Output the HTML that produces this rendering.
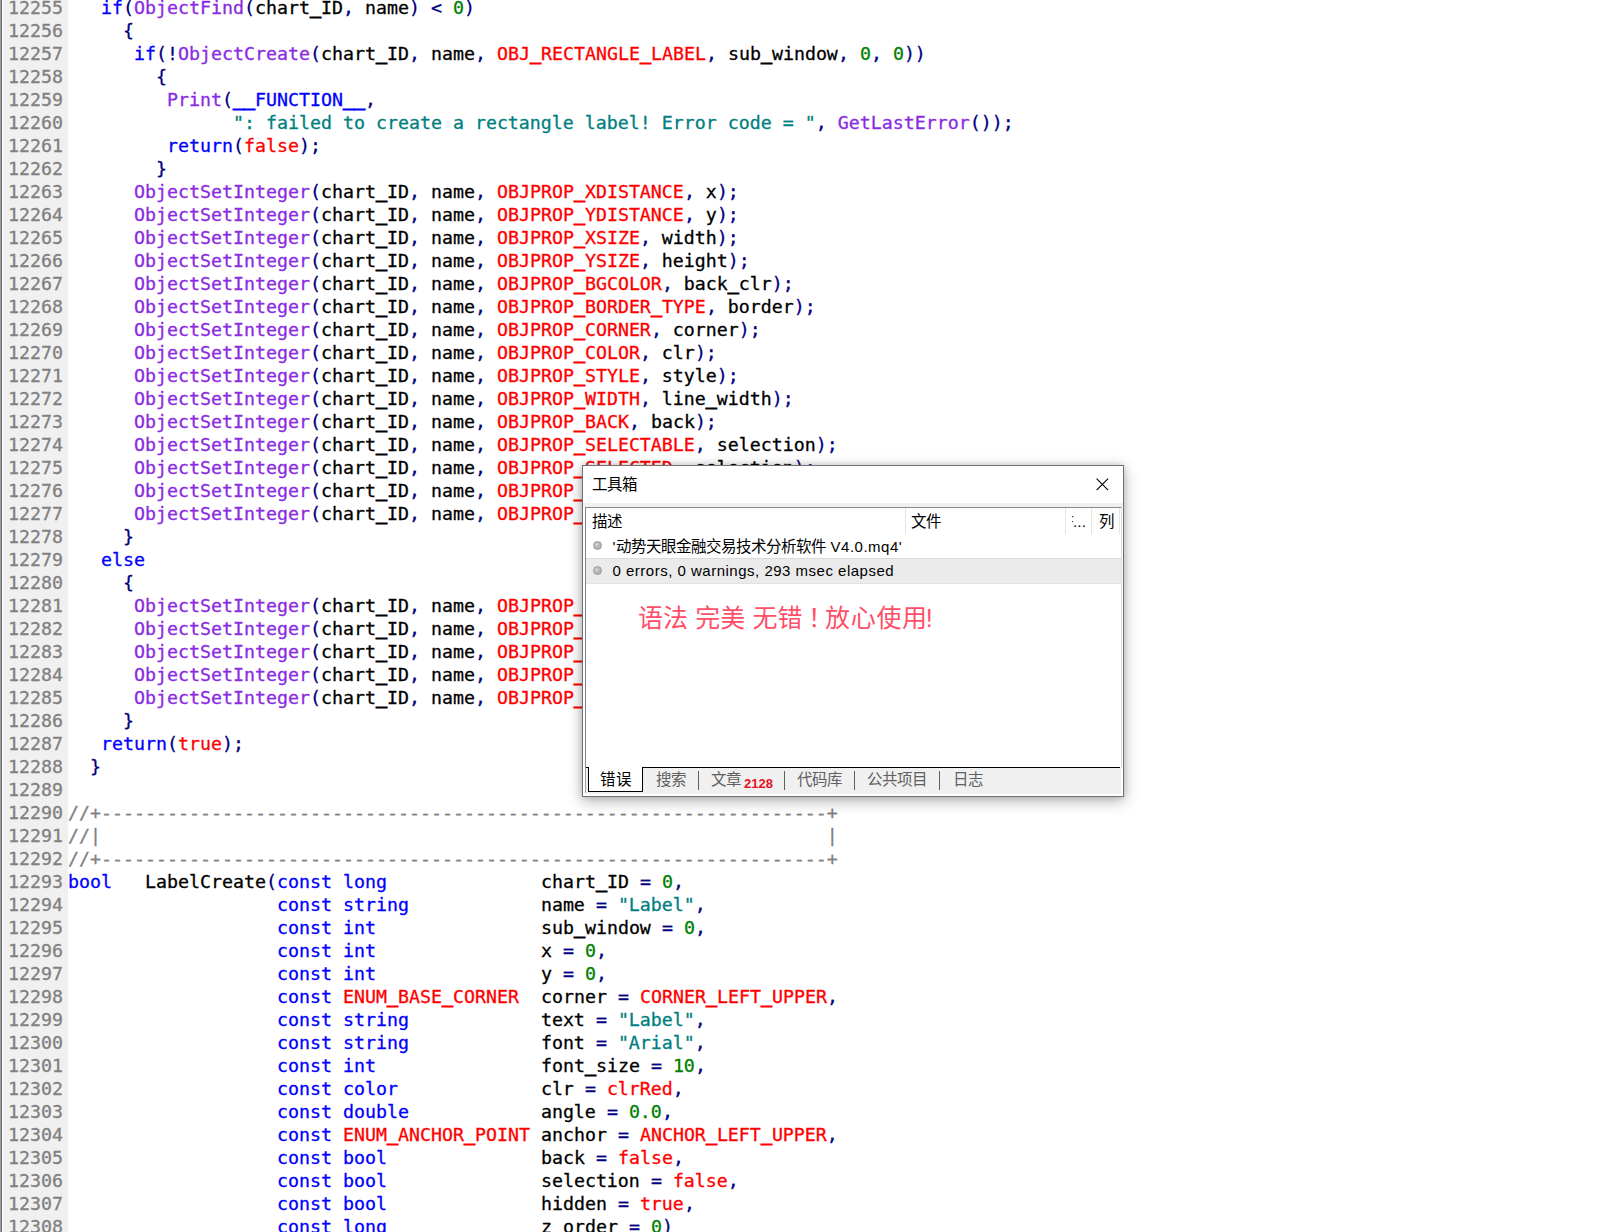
<!DOCTYPE html>
<html lang="zh-CN">
<head>
<meta charset="utf-8">
<title>MetaEditor</title>
<style>
html,body{margin:0;padding:0;}
body{width:1610px;height:1232px;overflow:hidden;background:#fff;position:relative;font-family:"Liberation Sans","Noto Sans CJK SC",sans-serif;}
#edge0{position:absolute;left:0;top:0;width:1px;height:1232px;background:#a0a0a0;}
#edge1{position:absolute;left:1px;top:0;width:1px;height:1232px;background:#696969;}
#gutter{position:absolute;left:3px;top:0;width:65px;height:1232px;background:#f0f0f0;}
pre{margin:0;position:absolute;top:-4px;font-family:"DejaVu Sans Mono","Liberation Mono",monospace;font-size:18.27px;line-height:23px;white-space:pre;-webkit-text-stroke:0.3px;}
#nums{left:8px;color:#808080;}
#code{left:68px;color:#000;}
#code .k{color:#0000ff;}
#code .f{color:#8a2be2;}
#code .e{color:#ff0000;}
#code .n{color:#008000;}
#code .s{color:#008080;}
#code .p{color:#000080;}
#code .c{color:#808080;}
#code .u{-webkit-text-stroke:1.1px;}

#dlg{position:absolute;left:582px;top:465px;width:540px;height:330px;border:1px solid #707070;background:#fff;box-shadow:0 4px 14px rgba(0,0,0,.30),0 0 6px rgba(0,0,0,.15);font-size:15.5px;letter-spacing:-0.5px;color:#000;}
#title{position:absolute;left:9px;top:8px;line-height:22px;}
#close{position:absolute;left:513px;top:12px;width:13px;height:13px;}
#band{position:absolute;left:0;top:37px;width:540px;height:4px;background:#f0f0f0;}
#list{position:absolute;left:2px;top:41px;width:535px;height:260px;border:1px solid #828790;border-bottom:none;border-right-color:#e0e0e0;background:#fff;}
.hd{position:absolute;top:1px;height:26px;line-height:26px;}
.sep{position:absolute;top:0;width:1px;height:26px;background:#e5e5e5;}
.row{position:absolute;left:0;width:535px;height:25px;line-height:25px;white-space:nowrap;}
.lat{font-size:15px;letter-spacing:0.5px;}
.row span.t{position:absolute;left:26.5px;top:0;}
.dot{position:absolute;left:7px;top:7px;width:9px;height:9px;border-radius:50%;background:radial-gradient(circle at 38% 36%,#d8d8d8 0,#bcbcbc 35%,#b2b2b2 60%);border:1.5px solid #989898;box-sizing:border-box;}
#msg{position:absolute;left:52px;top:93px;letter-spacing:0;word-spacing:0.3px;font-size:25px;line-height:34px;color:#ff4f68;white-space:nowrap;}
#tabs{position:absolute;left:3px;top:302px;width:535px;height:26px;background:#f0f0f0;}
#tabline{position:absolute;left:59px;top:301px;width:478px;height:1px;background:#000;}
#tabl2{position:absolute;left:3px;top:301px;width:3px;height:1px;background:#000;}
#lb{position:absolute;left:2px;top:301px;width:1px;height:26px;background:#a0a0a0;}
.tab{position:absolute;top:0;height:28px;line-height:24px;color:#606060;white-space:nowrap;}
.tsep{position:absolute;top:3px;width:1px;height:19px;background:#606060;}
#tab0{position:absolute;left:2px;top:-1px;width:53px;height:24px;border:1px solid #000;border-top:none;background:#fff;color:#000;line-height:25px;text-align:center;letter-spacing:0.5px;text-indent:1px;}
</style>
</head>
<body>
<div id="edge0"></div><div id="edge1"></div>
<div id="gutter"></div>
<pre id="nums">12255
12256
12257
12258
12259
12260
12261
12262
12263
12264
12265
12266
12267
12268
12269
12270
12271
12272
12273
12274
12275
12276
12277
12278
12279
12280
12281
12282
12283
12284
12285
12286
12287
12288
12289
12290
12291
12292
12293
12294
12295
12296
12297
12298
12299
12300
12301
12302
12303
12304
12305
12306
12307
12308</pre>
<pre id="code">   <span class="k">if</span><span class="p">(</span><span class="f">ObjectFind</span><span class="p">(</span>chart<span class="u">_</span>ID<span class="p">,</span> name<span class="p">)</span> <span class="p">&lt;</span> <span class="n">0</span><span class="p">)</span>
     <span class="p">{</span>
      <span class="k">if</span><span class="p">(!</span><span class="f">ObjectCreate</span><span class="p">(</span>chart<span class="u">_</span>ID<span class="p">,</span> name<span class="p">,</span> <span class="e">OBJ<span class="u">_</span>RECTANGLE<span class="u">_</span>LABEL</span><span class="p">,</span> sub<span class="u">_</span>window<span class="p">,</span> <span class="n">0</span><span class="p">,</span> <span class="n">0</span><span class="p">))</span>
        <span class="p">{</span>
         <span class="f">Print</span><span class="p">(</span><span class="k"><span class="u">__</span>FUNCTION<span class="u">__</span></span><span class="p">,</span>
               <span class="s">": failed to create a rectangle label! Error code = "</span><span class="p">,</span> <span class="f">GetLastError</span><span class="p">());</span>
         <span class="k">return</span><span class="p">(</span><span class="e">false</span><span class="p">);</span>
        <span class="p">}</span>
      <span class="f">ObjectSetInteger</span><span class="p">(</span>chart<span class="u">_</span>ID<span class="p">,</span> name<span class="p">,</span> <span class="e">OBJPROP<span class="u">_</span>XDISTANCE</span><span class="p">,</span> x<span class="p">);</span>
      <span class="f">ObjectSetInteger</span><span class="p">(</span>chart<span class="u">_</span>ID<span class="p">,</span> name<span class="p">,</span> <span class="e">OBJPROP<span class="u">_</span>YDISTANCE</span><span class="p">,</span> y<span class="p">);</span>
      <span class="f">ObjectSetInteger</span><span class="p">(</span>chart<span class="u">_</span>ID<span class="p">,</span> name<span class="p">,</span> <span class="e">OBJPROP<span class="u">_</span>XSIZE</span><span class="p">,</span> width<span class="p">);</span>
      <span class="f">ObjectSetInteger</span><span class="p">(</span>chart<span class="u">_</span>ID<span class="p">,</span> name<span class="p">,</span> <span class="e">OBJPROP<span class="u">_</span>YSIZE</span><span class="p">,</span> height<span class="p">);</span>
      <span class="f">ObjectSetInteger</span><span class="p">(</span>chart<span class="u">_</span>ID<span class="p">,</span> name<span class="p">,</span> <span class="e">OBJPROP<span class="u">_</span>BGCOLOR</span><span class="p">,</span> back<span class="u">_</span>clr<span class="p">);</span>
      <span class="f">ObjectSetInteger</span><span class="p">(</span>chart<span class="u">_</span>ID<span class="p">,</span> name<span class="p">,</span> <span class="e">OBJPROP<span class="u">_</span>BORDER<span class="u">_</span>TYPE</span><span class="p">,</span> border<span class="p">);</span>
      <span class="f">ObjectSetInteger</span><span class="p">(</span>chart<span class="u">_</span>ID<span class="p">,</span> name<span class="p">,</span> <span class="e">OBJPROP<span class="u">_</span>CORNER</span><span class="p">,</span> corner<span class="p">);</span>
      <span class="f">ObjectSetInteger</span><span class="p">(</span>chart<span class="u">_</span>ID<span class="p">,</span> name<span class="p">,</span> <span class="e">OBJPROP<span class="u">_</span>COLOR</span><span class="p">,</span> clr<span class="p">);</span>
      <span class="f">ObjectSetInteger</span><span class="p">(</span>chart<span class="u">_</span>ID<span class="p">,</span> name<span class="p">,</span> <span class="e">OBJPROP<span class="u">_</span>STYLE</span><span class="p">,</span> style<span class="p">);</span>
      <span class="f">ObjectSetInteger</span><span class="p">(</span>chart<span class="u">_</span>ID<span class="p">,</span> name<span class="p">,</span> <span class="e">OBJPROP<span class="u">_</span>WIDTH</span><span class="p">,</span> line<span class="u">_</span>width<span class="p">);</span>
      <span class="f">ObjectSetInteger</span><span class="p">(</span>chart<span class="u">_</span>ID<span class="p">,</span> name<span class="p">,</span> <span class="e">OBJPROP<span class="u">_</span>BACK</span><span class="p">,</span> back<span class="p">);</span>
      <span class="f">ObjectSetInteger</span><span class="p">(</span>chart<span class="u">_</span>ID<span class="p">,</span> name<span class="p">,</span> <span class="e">OBJPROP<span class="u">_</span>SELECTABLE</span><span class="p">,</span> selection<span class="p">);</span>
      <span class="f">ObjectSetInteger</span><span class="p">(</span>chart<span class="u">_</span>ID<span class="p">,</span> name<span class="p">,</span> <span class="e">OBJPROP<span class="u">_</span>SELECTED</span><span class="p">,</span> selection<span class="p">);</span>
      <span class="f">ObjectSetInteger</span><span class="p">(</span>chart<span class="u">_</span>ID<span class="p">,</span> name<span class="p">,</span> <span class="e">OBJPROP<span class="u">_</span>HIDDEN</span><span class="p">,</span> hidden<span class="p">);</span>
      <span class="f">ObjectSetInteger</span><span class="p">(</span>chart<span class="u">_</span>ID<span class="p">,</span> name<span class="p">,</span> <span class="e">OBJPROP<span class="u">_</span>ZORDER</span><span class="p">,</span> z<span class="u">_</span>order<span class="p">);</span>
     <span class="p">}</span>
   <span class="k">else</span>
     <span class="p">{</span>
      <span class="f">ObjectSetInteger</span><span class="p">(</span>chart<span class="u">_</span>ID<span class="p">,</span> name<span class="p">,</span> <span class="e">OBJPROP<span class="u">_</span>XDISTANCE</span><span class="p">,</span> x<span class="p">);</span>
      <span class="f">ObjectSetInteger</span><span class="p">(</span>chart<span class="u">_</span>ID<span class="p">,</span> name<span class="p">,</span> <span class="e">OBJPROP<span class="u">_</span>YDISTANCE</span><span class="p">,</span> y<span class="p">);</span>
      <span class="f">ObjectSetInteger</span><span class="p">(</span>chart<span class="u">_</span>ID<span class="p">,</span> name<span class="p">,</span> <span class="e">OBJPROP<span class="u">_</span>XSIZE</span><span class="p">,</span> width<span class="p">);</span>
      <span class="f">ObjectSetInteger</span><span class="p">(</span>chart<span class="u">_</span>ID<span class="p">,</span> name<span class="p">,</span> <span class="e">OBJPROP<span class="u">_</span>YSIZE</span><span class="p">,</span> height<span class="p">);</span>
      <span class="f">ObjectSetInteger</span><span class="p">(</span>chart<span class="u">_</span>ID<span class="p">,</span> name<span class="p">,</span> <span class="e">OBJPROP<span class="u">_</span>BGCOLOR</span><span class="p">,</span> back<span class="u">_</span>clr<span class="p">);</span>
     <span class="p">}</span>
   <span class="k">return</span><span class="p">(</span><span class="e">true</span><span class="p">);</span>
  <span class="p">}</span>

<span class="c">//+------------------------------------------------------------------+</span>
<span class="c">//|                                                                  |</span>
<span class="c">//+------------------------------------------------------------------+</span>
<span class="k">bool</span>   LabelCreate<span class="p">(</span><span class="k">const</span> <span class="k">long</span>              chart<span class="u">_</span>ID <span class="p">=</span> <span class="n">0</span><span class="p">,</span>
                   <span class="k">const</span> <span class="k">string</span>            name <span class="p">=</span> <span class="s">"Label"</span><span class="p">,</span>
                   <span class="k">const</span> <span class="k">int</span>               sub<span class="u">_</span>window <span class="p">=</span> <span class="n">0</span><span class="p">,</span>
                   <span class="k">const</span> <span class="k">int</span>               x <span class="p">=</span> <span class="n">0</span><span class="p">,</span>
                   <span class="k">const</span> <span class="k">int</span>               y <span class="p">=</span> <span class="n">0</span><span class="p">,</span>
                   <span class="k">const</span> <span class="e">ENUM<span class="u">_</span>BASE<span class="u">_</span>CORNER</span>  corner <span class="p">=</span> <span class="e">CORNER<span class="u">_</span>LEFT<span class="u">_</span>UPPER</span><span class="p">,</span>
                   <span class="k">const</span> <span class="k">string</span>            text <span class="p">=</span> <span class="s">"Label"</span><span class="p">,</span>
                   <span class="k">const</span> <span class="k">string</span>            font <span class="p">=</span> <span class="s">"Arial"</span><span class="p">,</span>
                   <span class="k">const</span> <span class="k">int</span>               font<span class="u">_</span>size <span class="p">=</span> <span class="n">10</span><span class="p">,</span>
                   <span class="k">const</span> <span class="k">color</span>             clr <span class="p">=</span> <span class="e">clrRed</span><span class="p">,</span>
                   <span class="k">const</span> <span class="k">double</span>            angle <span class="p">=</span> <span class="n">0.0</span><span class="p">,</span>
                   <span class="k">const</span> <span class="e">ENUM<span class="u">_</span>ANCHOR<span class="u">_</span>POINT</span> anchor <span class="p">=</span> <span class="e">ANCHOR<span class="u">_</span>LEFT<span class="u">_</span>UPPER</span><span class="p">,</span>
                   <span class="k">const</span> <span class="k">bool</span>              back <span class="p">=</span> <span class="e">false</span><span class="p">,</span>
                   <span class="k">const</span> <span class="k">bool</span>              selection <span class="p">=</span> <span class="e">false</span><span class="p">,</span>
                   <span class="k">const</span> <span class="k">bool</span>              hidden <span class="p">=</span> <span class="e">true</span><span class="p">,</span>
                   <span class="k">const</span> <span class="k">long</span>              z<span class="u">_</span>order <span class="p">=</span> <span class="n">0</span><span class="p">)</span></pre>

<div id="dlg">
  <div id="title">工具箱</div>
  <svg id="close" viewBox="0 0 13 13"><path d="M0.6 0.6 L12.1 12.1 M12.1 0.6 L0.6 12.1" stroke="#000" stroke-width="1.1" fill="none"/></svg>
  <div id="band"></div>
  <div id="list">
    <div class="hd" style="left:6px">描述</div>
    <div class="sep" style="left:319px"></div>
    <div class="hd" style="left:325px">文件</div>
    <div class="sep" style="left:479px"></div>
    <div class="hd" style="left:485px;letter-spacing:0"><span style="position:relative;top:-5px;font-size:11px;margin-right:-1px">:</span>...</div>
    <div class="sep" style="left:505px"></div>
    <div class="hd" style="left:513px">列</div>
    <div class="sep" style="left:533px"></div>
    <div class="row" style="top:26px"><div class="dot"></div><span class="t"><span class="lat">'</span>动势天眼金融交易技术分析软件<span class="lat"> V4.0.mq4'</span></span></div>
    <div class="row" style="top:50px;height:24px;background:#ebebeb;border-top:1px solid #d9d9d9;border-bottom:1px solid #e2e2e2"><div class="dot"></div><span class="t lat" style="top:-1px">0 errors, 0 warnings, 293 msec elapsed</span></div>
    <div id="msg">语法 完美 无错<span style="display:inline-block;width:22.5px;text-indent:5.5px">！</span><span style="letter-spacing:0.7px">放心使用</span><span style="margin-left:-2px">!</span></div>
  </div>
  <div id="tabs">
    <div id="tab0">错误</div>
    <div class="tab" style="left:70px">搜索</div>
    <div class="tsep" style="left:112px"></div>
    <div class="tab" style="left:125px">文章</div>
    <div class="tab" style="left:158px;top:4px;font-size:13px;letter-spacing:0;font-weight:bold;color:#e81123">2128</div>
    <div class="tsep" style="left:198px"></div>
    <div class="tab" style="left:211px">代码库</div>
    <div class="tsep" style="left:268px"></div>
    <div class="tab" style="left:281px">公共项目</div>
    <div class="tsep" style="left:353px"></div>
    <div class="tab" style="left:367px">日志</div>
  </div>
  <div id="tabline"></div><div id="tabl2"></div><div id="lb"></div>
</div>
</body>
</html>
